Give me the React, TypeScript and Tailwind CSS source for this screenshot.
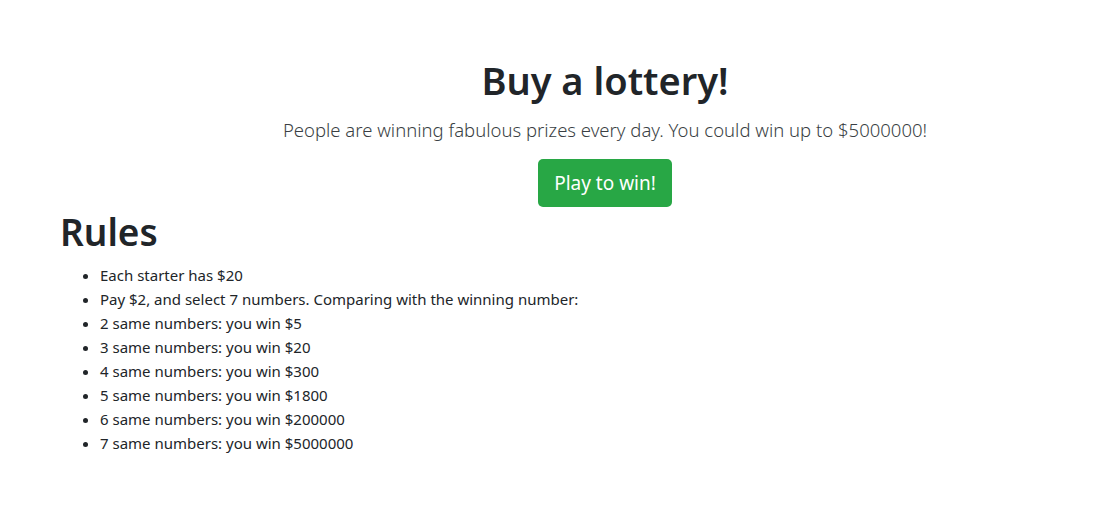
const rules = [
  "Each starter has $20",
  "Pay $2, and select 7 numbers. Comparing with the winning number:",
  "2 same numbers: you win $5",
  "3 same numbers: you win $20",
  "4 same numbers: you win $300",
  "5 same numbers: you win $1800",
  "6 same numbers: you win $200000",
  "7 same numbers: you win $5000000",
];

export default function App() {
  return (
    <div className="min-h-screen bg-white text-[#212529] font-['Noto_Sans','Open_Sans',sans-serif]">
      {/* Jumbotron */}
      <div className="pl-[90px] pt-[58px] text-center">
        <h1 className="text-[38px] font-semibold leading-[1.2]">Buy a lottery!</h1>
        <p className="mt-[12px] text-[18.5px] font-light leading-[1.5] text-[#3a3f44]">
          People are winning fabulous prizes every day. You could win up to $5000000!
        </p>
        <button className="mt-[16px] h-[48px] rounded-[5px] bg-[#28a745] px-4 text-[19px] leading-[1.5] text-white">
          Play to win!
        </button>
      </div>

      {/* Rules */}
      <div className="px-[60px] pt-[3px]">
        <h1 className="text-[37px] font-semibold leading-[1.2]">Rules</h1>
        <ul className="mt-[8px] list-disc pl-10 text-[15px] leading-6">
          {rules.map((r) => (
            <li key={r}>{r}</li>
          ))}
        </ul>
      </div>
    </div>
  );
}
